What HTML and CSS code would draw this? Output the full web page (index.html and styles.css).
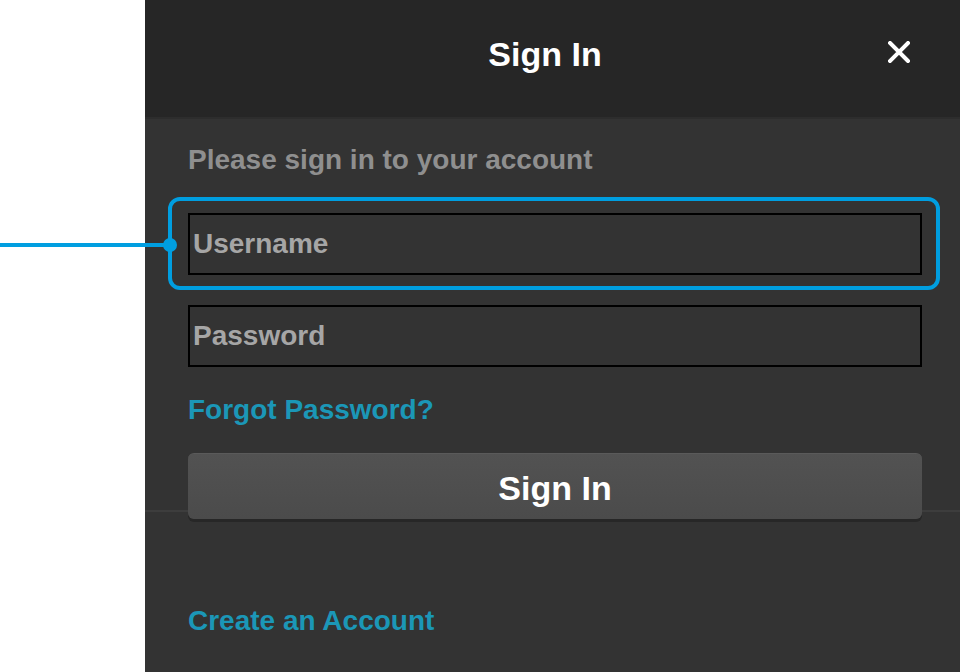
FILE: index.html
```html
<!DOCTYPE html>
<html lang="en">
<head>
  <meta charset="UTF-8">
  <meta name="viewport" content="width=device-width, initial-scale=1">
  <title>Sign In</title>
  <link rel="stylesheet" href="styles.css">
</head>
<body>
  <div class="page">
    <div class="gutter"></div>

    <div class="panel">
      <header class="panel-header">
        <h1>Sign In</h1>
        <button class="close-btn" aria-label="Close">
          <svg width="22" height="22" viewBox="0 0 22 22">
            <path d="M2 2 L20 20 M20 2 L2 20" stroke="#fff" stroke-width="4" stroke-linecap="square"></path>
          </svg>
        </button>
      </header>

      <section class="signin-form">
        <p class="prompt">Please sign in to your account</p>
        <input class="field" type="text" placeholder="Username">
        <input class="field" type="password" placeholder="Password">
        <a class="link forgot" href="#">Forgot Password?</a>
        <button class="submit-btn">Sign In</button>
      </section>

      <div class="footer">
        <a class="link" href="#">Create an Account</a>
      </div>
    </div>

    <!-- callout pointing at the username field -->
    <div class="callout-line"></div>
    <div class="callout-dot"></div>
    <div class="callout-box"></div>
  </div>
</body>
</html>
```

FILE: styles.css
```css
body {
  margin: 0;
  padding: 0;
  background-color: #fff;
  font-family: "Liberation Sans", Arial, sans-serif;
}
.page {
  position: relative;
  display: flex;
  height: 672px;
  overflow: hidden;
}
.gutter {
  width: 145px;
  flex-shrink: 0;
}
.panel {
  flex: 1;
  background-color: #333333;
}
.panel-header {
  position: relative;
  box-sizing: border-box;
  height: 119px;
  padding: 37px 15px 0 0;
  background-color: #262626;
  border-bottom: 2px solid #2d2d2d;
  text-align: center;
}
.panel-header h1 {
  margin: 0;
  color: #fff;
  font-size: 34px;
  line-height: 34px;
  font-weight: bold;
}
.close-btn {
  position: absolute;
  top: 41px;
  right: 50px;
  padding: 0;
  border: none;
  background: none;
  cursor: pointer;
  line-height: 0;
}
.signin-form {
  display: flex;
  flex-direction: column;
  align-items: flex-start;
  padding: 27px 38px 0 43px;
  border-bottom: 2px solid #3d3d3d;
}
.prompt {
  margin: 0;
  color: #8f8f8f;
  font-size: 28px;
  line-height: 28px;
  font-weight: bold;
}
.field {
  box-sizing: border-box;
  width: 100%;
  height: 62px;
  margin: 39px 0 0 0;
  padding: 0 3px;
  border: 2px solid #000;
  border-radius: 0;
  background-color: #333333;
  color: #ddd;
  font-family: inherit;
  font-size: 28px;
  font-weight: bold;
  outline: none;
}
.field + .field {
  margin-top: 30px;
}
.field::placeholder {
  color: #a6a6a6;
}
.link {
  color: #1b97b7;
  font-size: 28px;
  line-height: 28px;
  font-weight: bold;
  text-decoration: none;
}
.forgot {
  margin-top: 29px;
}
.submit-btn {
  box-sizing: border-box;
  width: 100%;
  height: 66px;
  margin: 29px 0 -9px 0;
  padding: 4px 0 0 0;
  border: none;
  border-top: 1px solid #5a5a5a;
  border-radius: 6px;
  background: linear-gradient(#525252, #4b4b4b);
  box-shadow: 0 3px 0 #272727;
  color: #fff;
  font-family: inherit;
  font-size: 34px;
  line-height: 61px;
  font-weight: bold;
  cursor: pointer;
}
.footer {
  padding: 95px 0 0 43px;
}
.callout-line {
  position: absolute;
  left: 0;
  top: 243px;
  width: 170px;
  height: 4px;
  background-color: #009ee0;
}
.callout-dot {
  position: absolute;
  left: 163px;
  top: 238px;
  width: 14px;
  height: 14px;
  border-radius: 50%;
  background-color: #009ee0;
}
.callout-box {
  position: absolute;
  left: 168px;
  top: 197px;
  width: 772px;
  height: 93px;
  box-sizing: border-box;
  border: 4px solid #009ee0;
  border-radius: 12px;
}
```
